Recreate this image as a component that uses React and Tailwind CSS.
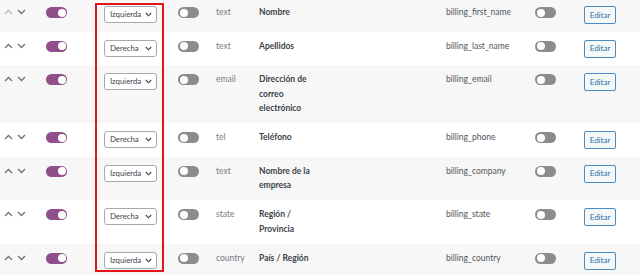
const rows = [
  { pos: 'Izquierda', type: 'text', label: 'Nombre', name: 'billing_first_name', first: true },
  { pos: 'Derecha', type: 'text', label: 'Apellidos', name: 'billing_last_name' },
  { pos: 'Izquierda', type: 'email', label: 'Dirección de correo electrónico', name: 'billing_email' },
  { pos: 'Derecha', type: 'tel', label: 'Teléfono', name: 'billing_phone' },
  { pos: 'Izquierda', type: 'text', label: 'Nombre de la empresa', name: 'billing_company' },
  { pos: 'Derecha', type: 'state', label: 'Región / Provincia', name: 'billing_state' },
  { pos: 'Izquierda', type: 'country', label: 'País / Región', name: 'billing_country' },
]

function Chevron({ up, light }) {
  return (
    <svg width="9" height="6" viewBox="0 0 9 6" className={light ? 'text-[#b4b7ba]' : 'text-[#6b7075]'}>
      <polyline
        points={up ? '1,5 4.5,1.5 8,5' : '1,1 4.5,4.5 8,1'}
        fill="none"
        stroke="currentColor"
        strokeWidth="1.3"
      />
    </svg>
  )
}

function Toggle({ on }) {
  return (
    <div
      className={
        'relative w-[21px] h-[11px] rounded-full ' + (on ? 'bg-[#8f4f8a]' : 'bg-[#8c8c8c]')
      }
    >
      <div
        className={
          'absolute top-[1.5px] w-[8px] h-[8px] rounded-full bg-white ' +
          (on ? 'right-[1.5px]' : 'left-[1.5px]')
        }
      />
    </div>
  )
}

function Select({ value }) {
  return (
    <div className="w-[53px] h-[17px] border border-[#a7aaad] rounded-[3px] bg-white flex items-center justify-between pl-[5px] pr-[4px] text-[7.8px] text-[#3c434a]">
      <span>{value}</span>
      <svg width="7" height="5" viewBox="0 0 7 5" className="text-[#3c434a]">
        <polyline points="0.8,1 3.5,3.8 6.2,1" fill="none" stroke="currentColor" strokeWidth="1.1" />
      </svg>
    </div>
  )
}

export default function App() {
  return (
    <div className="relative w-[640px] h-[275px] overflow-hidden bg-white" style={{ fontFamily: 'Lato, "Liberation Sans", sans-serif' }}>
      <div className="mt-[-2px]">
        {rows.map((r, i) => (
          <div
            key={r.name}
            className={
              'flex items-start pt-[7px] pb-[7.5px] leading-[14.5px] text-[8.5px] ' +
              (i % 2 === 0 ? 'bg-[#f7f7f7]' : 'bg-white')
            }
          >
            <div className="w-[46px] shrink-0 flex items-center gap-[4px] pl-[4px] mt-[4px]">
              <Chevron up light={r.first} />
              <Chevron />
            </div>
            <div className="w-[58px] shrink-0 mt-[2px]">
              <Toggle on />
            </div>
            <div className="w-[74px] shrink-0 mt-[1px]">
              <Select value={r.pos} />
            </div>
            <div className="w-[38px] shrink-0 mt-[2px]">
              <Toggle />
            </div>
            <div className="w-[43px] shrink-0 text-[#787c82]">{r.type}</div>
            <div className="w-[58px] shrink-0 font-bold text-[#3c434a]">{r.label}</div>
            <div className="w-[129px] shrink-0" />
            <div className="w-[89px] shrink-0 text-[#50575e]">{r.name}</div>
            <div className="w-[49px] shrink-0 mt-[2px]">
              <Toggle />
            </div>
            <div className="shrink-0 mt-[1px]">
              <div className="w-[32px] h-[18px] border border-[#4a8bc2] rounded-[2px] bg-[#f6f7f7] text-[#2271b1] text-[8px] flex items-center justify-center">
                Editar
              </div>
            </div>
          </div>
        ))}
      </div>
      <div className="absolute left-[95px] top-[3px] w-[69px] h-[269px] border-2 border-[#e3141b]" />
    </div>
  )
}
